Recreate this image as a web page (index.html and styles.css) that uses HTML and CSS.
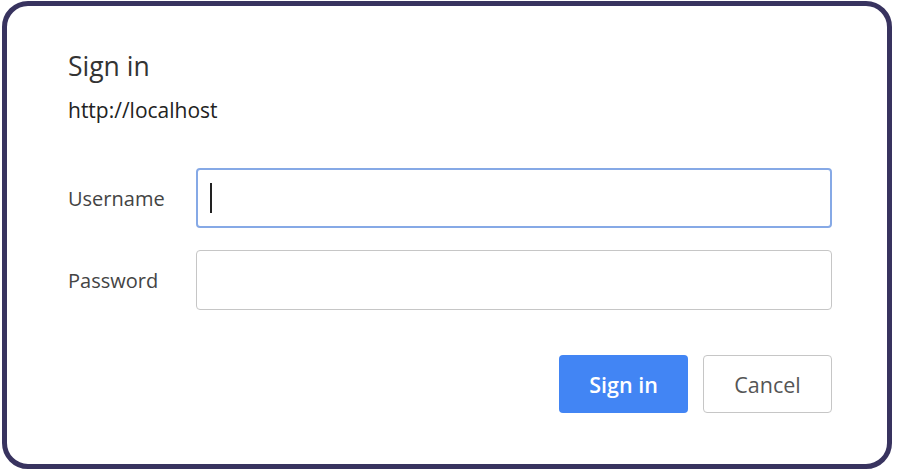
FILE: index.html
```html
<!DOCTYPE html>
<html lang="en">
<head>
<meta charset="utf-8">
<title>Sign in</title>
<link rel="stylesheet" href="styles.css">
</head>
<body>
<div class="frame">
  <h1 class="title">Sign in</h1>
  <div class="origin">http://localhost</div>
  <div class="form">
    <label class="label">Username</label>
    <div class="field focused"><span class="caret"></span></div>
    <label class="label">Password</label>
    <div class="field"></div>
  </div>
  <div class="actions">
    <button class="btn primary">Sign in</button>
    <button class="btn secondary">Cancel</button>
  </div>
</div>
</body>
</html>
```

FILE: styles.css
```css
html, body {
  margin: 0;
  padding: 0;
  background: #ffffff;
}
body {
  padding: 1px 5px 3px 2px;
  font-family: "Open Sans", "Noto Sans", sans-serif;
}
.frame {
  box-sizing: border-box;
  width: 890px;
  height: 468px;
  border: 5px solid #38335f;
  border-radius: 26px;
  background: #ffffff;
  padding: 42px 55px 0 61px;
}
.title {
  margin: 0;
  font-size: 26.5px;
  font-weight: 400;
  line-height: 36px;
  color: #333333;
}
.origin {
  margin-top: 12px;
  font-size: 21px;
  line-height: 28px;
  color: #222222;
}
.form {
  display: grid;
  grid-template-columns: 128px 1fr;
  row-gap: 22px;
  align-items: center;
  margin-top: 44px;
}
.label {
  font-size: 20px;
  color: #444444;
}
.field {
  box-sizing: border-box;
  height: 60px;
  border: 1.5px solid #c6c6c6;
  border-radius: 4px;
  display: flex;
  align-items: center;
  padding-left: 12.5px;
}
.field.focused {
  border: 2px solid #86a9e6;
  padding-left: 12px;
}
.caret {
  width: 2px;
  height: 30px;
  background: #222222;
}
.actions {
  display: flex;
  justify-content: flex-end;
  gap: 15px;
  margin-top: 45px;
}
.btn {
  box-sizing: border-box;
  width: 129px;
  height: 58px;
  border-radius: 4px;
  font-family: inherit;
  font-size: 21.5px;
  padding: 0;
}
.primary {
  background: #4285f4;
  border: none;
  color: #ffffff;
  font-weight: 600;
}
.secondary {
  background: #ffffff;
  border: 1.5px solid #c6c6c6;
  color: #555555;
}
```
